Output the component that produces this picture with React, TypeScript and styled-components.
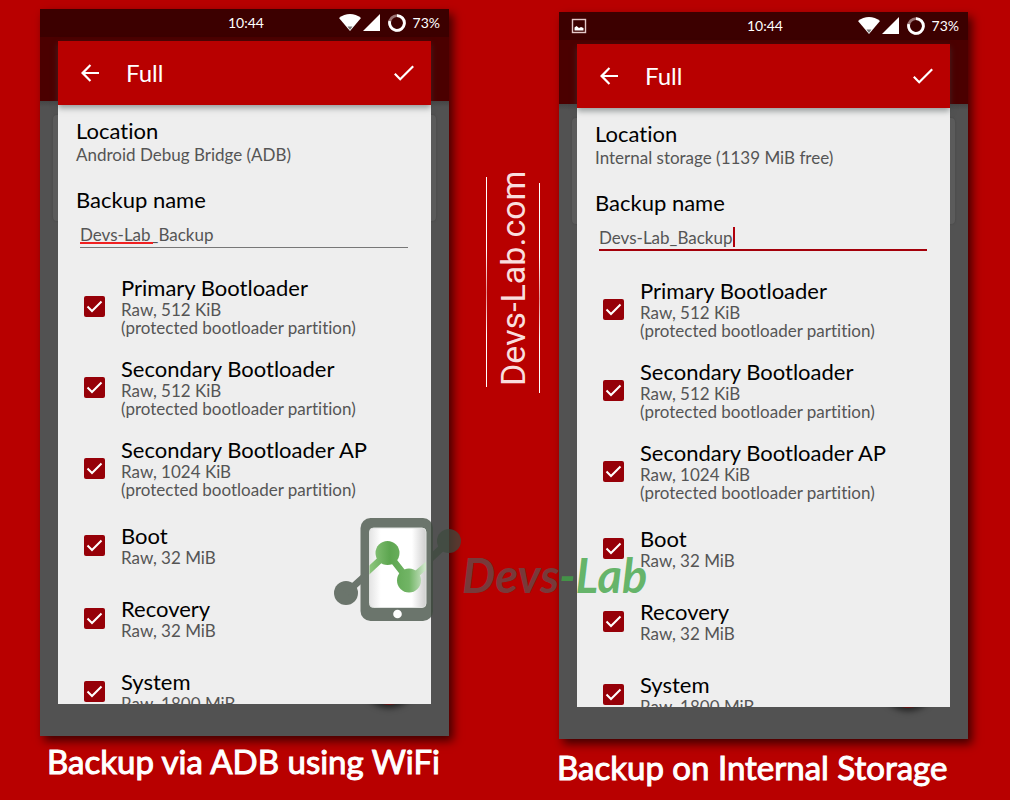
import React from 'react';
import styled, { createGlobalStyle } from 'styled-components';

const GlobalStyle = createGlobalStyle`
  *, *::before, *::after { box-sizing: border-box; }
  body { margin: 0; background: #b80000; }
`;

const Page = styled.main`
  position: relative;
  display: grid;
  grid-template-columns: minmax(0, 1fr) 110px minmax(0, 1fr);
  min-height: 100vh;
  padding: 0 42px 0 40px;
  background: #b80000;
  font-family: Lato, "Liberation Sans", sans-serif;
  font-variant-ligatures: none;
  overflow: hidden;
`;

const Column = styled.section<{ $top: number }>`
  padding-top: ${(p) => p.$top}px;
`;

const Phone = styled.div`
  position: relative;
  padding-bottom: 32px;
  background: linear-gradient(#4b0000 92px, #454545 92px, #525252 98px);
  box-shadow: 4px 5px 9px rgba(0, 0, 0, 0.65);
`;

const BackCard = styled.div`
  position: absolute;
  top: 106px;
  left: 13px;
  right: 13px;
  height: 106px;
  border-radius: 4px;
  background: #5b5b5b;
  box-shadow: 0 0 2px #444;
`;

const RoundAction = styled.div`
  position: absolute;
  right: 32px;
  bottom: 31px;
  width: 56px;
  height: 56px;
  border-radius: 50%;
  background: #6b1212;
  box-shadow: 0 3px 6px rgba(0, 0, 0, 0.6);
`;

const StatusBar = styled.header`
  display: grid;
  grid-template-columns: 1fr auto 1fr;
  align-items: center;
  height: 28px;
  margin-bottom: 4px;
  padding: 0 9px 0 12px;
  background: #3c0000;
  color: #fff;
  font-size: 14px;
  line-height: 20px;

  svg { display: block; }
`;

const StatusRight = styled.div`
  display: flex;
  align-items: center;
  justify-content: flex-end;
  gap: 7px;
`;

const Dialog = styled.div`
  position: relative;
  margin: 0 18px;
  background: #eee;
`;

const DialogBar = styled.div`
  position: relative;
  display: flex;
  align-items: center;
  height: 64px;
  padding: 0 15px 0 20px;
  background: #b80000;
  color: #fff;
  box-shadow: 0 3px 6px rgba(60, 70, 70, 0.5);
`;

const IconButton = styled.button`
  display: flex;
  padding: 0;
  border: 0;
  background: none;
  color: inherit;
`;

const DialogTitle = styled.h2`
  flex: 1;
  margin: 0 0 0 24px;
  font-size: 24px;
  font-weight: 400;
  line-height: 32px;
`;

const DialogBody = styled.div`
  max-height: 599px;
  padding: 13px 18px 0;
  overflow: hidden;
`;

const Title = styled.span`
  display: block;
  color: #000;
  font-size: 22px;
  font-weight: 400;
  line-height: 26px;
`;

const Detail = styled.span`
  display: block;
  color: #555;
  font-size: 17px;
  line-height: 18px;
  white-space: nowrap;
`;

const LocationBlock = styled.div`
  margin-bottom: 23px;
  ${Detail} { margin-top: 2px; }
`;

const Field = styled.div<{ $active: boolean }>`
  position: relative;
  margin: 7px 5px 0 4px;
  height: 28px;
  border-bottom: ${(p) => (p.$active ? '2px solid #a4000a' : '1px solid #777')};
`;

const NameInput = styled.input`
  display: block;
  width: 100%;
  height: 26px;
  padding: 2px 0 0;
  border: 0;
  outline: 0;
  background: none;
  color: #555;
  font: 17px/20px Lato, "Liberation Sans", sans-serif;
`;

const SpellMark = styled.span`
  position: absolute;
  left: 0;
  bottom: 3px;
  width: 73px;
  height: 2px;
  background: #f02020;
`;

const Caret = styled.span`
  position: absolute;
  left: 134px;
  bottom: 2px;
  width: 2px;
  height: 20px;
  background: #b0000c;
`;

const List = styled.ul`
  margin: 17px 0 0;
  padding: 0;
  list-style: none;
`;

const Row = styled.li`
  display: flex;
  align-items: center;
  min-height: 73px;
  padding: 10px 0 9px 8px;
`;

const Label = styled.label`
  display: flex;
  align-items: center;
  gap: 16px;
`;

const Tick = styled.span`
  position: relative;
  display: block;
  flex: none;
  width: 21px;
  height: 21px;

  input {
    appearance: none;
    display: block;
    width: 21px;
    height: 21px;
    margin: 0;
    border-radius: 2px;
    background: #960008;
  }

  svg {
    position: absolute;
    inset: 0;
    pointer-events: none;
  }
`;

const Caption = styled.h1<{ $align: string; $gap: number }>`
  margin: ${(p) => p.$gap}px 0 0 -2px;
  color: #fff;
  font-size: 33px;
  font-weight: 400;
  line-height: 44px;
  text-align: ${(p) => p.$align};
  white-space: nowrap;
  -webkit-text-stroke: 1px #fff;
`;

const Divider = styled.div`
  display: flex;
  align-items: flex-start;
  justify-content: center;
  gap: 4px;
  padding: 174px 0 0 18px;
`;

const Rule = styled.span<{ $drop: number }>`
  width: 1px;
  height: 210px;
  margin-top: ${(p) => p.$drop}px;
  background: linear-gradient(#fff 35%, #e09090 55%, #fff 75%);
`;

const SideText = styled.span`
  width: 44px;
  height: 212px;
  color: #f9dede;
  font-family: Roboto, "Liberation Sans", sans-serif;
  font-size: 34px;
  font-weight: 400;
  line-height: 44px;
  white-space: nowrap;
  writing-mode: vertical-rl;
  rotate: 180deg;
`;

const Watermark = styled.div`
  position: absolute;
  top: 518px;
  left: 50%;
  margin-left: -171px;
  display: flex;
  align-items: flex-start;
  pointer-events: none;
`;

const Brand = styled.span`
  display: flex;
  margin-top: 28px;
  font-size: 47px;
  font-style: italic;
  font-weight: 700;
  line-height: 58px;
`;

const BrandPart = styled.span<{ $color: string }>`
  color: ${(p) => p.$color};
`;

const PictureIcon = () => (
  <svg width="16" height="16" viewBox="0 0 16 16" fill="none" aria-hidden="true">
    <rect x="1.5" y="1.5" width="13" height="13" stroke="#e4c8c8" strokeWidth="1.4" />
    <path d="M3.500 12.500V9.500l2-1.500 2.500 2 2-1 2.500 1v2.500z" fill="#fff" />
  </svg>
);

const SignalIcons = () => (
  <svg width="67" height="20" viewBox="0 0 67 20" fill="none" aria-hidden="true">
    <path d="M0 5C6.500-.2 15.500-.2 22 5L11 18z" fill="#fff" />
    <path d="M8.500 13.500h5L11 17z" fill="#777" />
    <path d="M41 1v17H24z" fill="#fff" />
    <circle cx="58" cy="10" r="7.400" stroke="#9b7474" strokeWidth="2.800" />
    <path d="M58 2.600A7.400 7.400 0 1 1 50.800 8.200" stroke="#fff" strokeWidth="2.800" />
  </svg>
);

const BackIcon = () => (
  <svg width="24" height="24" viewBox="0 0 24 24" aria-hidden="true">
    <path d="M21 10.900H7.200l6-6.200-1.500-1.500L3 12l8.700 8.800 1.500-1.500-6-6.200H21z" fill="currentColor" />
  </svg>
);

const DoneIcon = () => (
  <svg width="24" height="24" viewBox="0 0 24 24" fill="none" aria-hidden="true">
    <path d="M2.800 12.800l5.400 5.400L21.200 5.200" stroke="currentColor" strokeWidth="2.200" />
  </svg>
);

const Logo = () => (
  <svg width="128" height="104" viewBox="334 518 128 104" aria-hidden="true">
    <defs>
      <linearGradient id="screen">
        <stop offset="0" stopColor="#e4e4e4" />
        <stop offset="0.2" stopColor="#fff" />
        <stop offset="0.75" stopColor="#fff" />
        <stop offset="1" stopColor="#cecece" />
      </linearGradient>
      <linearGradient id="leaf" gradientUnits="userSpaceOnUse" x1="370" y1="0" x2="426" y2="0">
        <stop offset="0" stopColor="#8cc57c" />
        <stop offset="0.35" stopColor="#5da650" />
        <stop offset="0.7" stopColor="#72b566" />
        <stop offset="1" stopColor="#d3e8cf" />
      </linearGradient>
      <clipPath id="glass">
        <rect x="369.500" y="528" width="56.500" height="79.500" rx="4" />
      </clipPath>
    </defs>
    <g opacity="0.740" fill="#3e4b3f">
      <rect x="360.500" y="518" width="72.500" height="103" rx="10" />
      <circle cx="346" cy="593" r="12" />
      <circle cx="449" cy="541" r="12" />
      <path d="M346 593l20-18M428 561l21-20" stroke="#3e4b3f" strokeWidth="7" />
    </g>
    <rect x="369.500" y="528" width="56.500" height="79.500" rx="4" fill="url(#screen)" stroke="#dfe2df" />
    <g clipPath="url(#glass)" fill="url(#leaf)">
      <path d="M366 573l21.500-20 21.500 27.500 22-19" stroke="url(#leaf)" strokeWidth="6.500" fill="none" />
      <circle cx="387.500" cy="553" r="12" />
      <circle cx="409" cy="580.500" r="12" />
    </g>
    <circle cx="397.500" cy="614" r="4.300" fill="#fff" />
  </svg>
);

interface Partition {
  name: string;
  size: string;
  note?: string;
}

const note = '(protected bootloader partition)';

const partitions: Partition[] = [
  { name: 'Primary Bootloader', size: 'Raw, 512 KiB', note },
  { name: 'Secondary Bootloader', size: 'Raw, 512 KiB', note },
  { name: 'Secondary Bootloader AP', size: 'Raw, 1024 KiB', note },
  { name: 'Boot', size: 'Raw, 32 MiB' },
  { name: 'Recovery', size: 'Raw, 32 MiB' },
  { name: 'System', size: 'Raw, 1800 MiB' },
];

interface BackupPhoneProps {
  id: string;
  location: string;
  active?: boolean;
}

const BackupPhone = ({ id, location, active = false }: BackupPhoneProps) => (
  <Phone>
    <BackCard />
    <RoundAction />
    <StatusBar>
      <div>{active && <PictureIcon />}</div>
      <span>10:44</span>
      <StatusRight>
        <SignalIcons />
        <span>73%</span>
      </StatusRight>
    </StatusBar>
    <Dialog>
      <DialogBar>
        <IconButton type="button" aria-label="Back"><BackIcon /></IconButton>
        <DialogTitle>Full</DialogTitle>
        <IconButton type="button" aria-label="Done"><DoneIcon /></IconButton>
      </DialogBar>
      <DialogBody>
        <LocationBlock>
          <Title>Location</Title>
          <Detail>{location}</Detail>
        </LocationBlock>
        <Title as="label" htmlFor={`${id}-name`}>Backup name</Title>
        <Field $active={active}>
          <NameInput id={`${id}-name`} defaultValue="Devs-Lab_Backup" spellCheck={false} />
          {active ? <Caret /> : <SpellMark />}
        </Field>
        <List>
          {partitions.map((p) => (
            <Row key={p.name}>
              <Label>
                <Tick>
                  <input type="checkbox" defaultChecked />
                  <svg width="21" height="21" viewBox="0 0 21 21" fill="none" aria-hidden="true">
                    <path d="M3.500 10.500l4.500 4.500 9.500-9.500" stroke="#fff" strokeWidth="2" />
                  </svg>
                </Tick>
                <span>
                  <Title>{p.name}</Title>
                  <Detail>{p.size}</Detail>
                  {p.note && <Detail>{p.note}</Detail>}
                </span>
              </Label>
            </Row>
          ))}
        </List>
      </DialogBody>
    </Dialog>
  </Phone>
);

export default function App() {
  return (
    <>
      <GlobalStyle />
      <Page>
        <Column $top={9}>
          <BackupPhone id="adb" location="Android Debug Bridge (ADB)" />
          <Caption $align="center" $gap={3}>Backup via ADB using WiFi</Caption>
        </Column>
        <Divider>
          <Rule $drop={3} />
          <SideText>Devs-Lab.com</SideText>
          <Rule $drop={9} />
        </Divider>
        <Column $top={12}>
          <BackupPhone id="internal" location="Internal storage (1139 MiB free)" active />
          <Caption $align="left" $gap={6}>Backup on Internal Storage</Caption>
        </Column>
        <Watermark>
          <Logo />
          <Brand>
            <BrandPart $color="rgba(98, 78, 78, 0.75)">Devs</BrandPart>
            <BrandPart $color="rgba(65, 165, 70, 0.8)">-Lab</BrandPart>
          </Brand>
        </Watermark>
      </Page>
    </>
  );
}
